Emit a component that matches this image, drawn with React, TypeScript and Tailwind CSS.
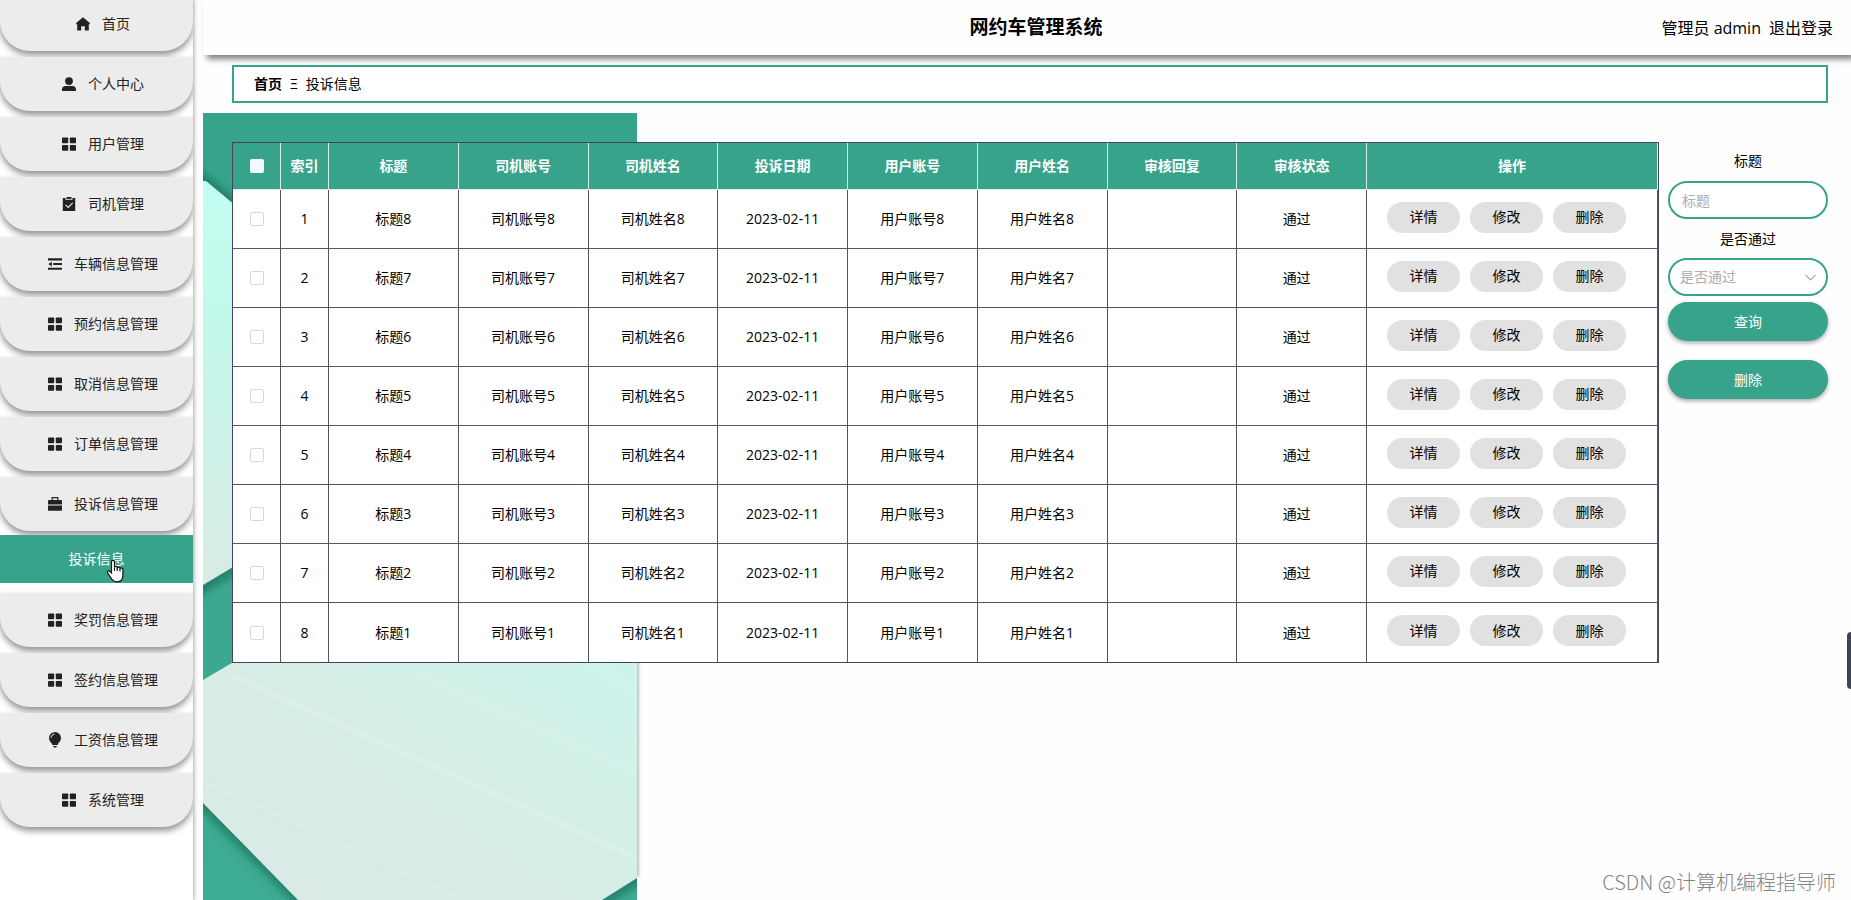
import type { ReactNode } from "react";

type IconName = "home" | "user" | "menu" | "claim" | "fold" | "briefcase" | "bulb";

interface MenuItem {
  label: string;
  icon: IconName;
  children?: string[];
}

const menu: MenuItem[] = [
  { label: "首页", icon: "home" },
  { label: "个人中心", icon: "user" },
  { label: "用户管理", icon: "menu" },
  { label: "司机管理", icon: "claim" },
  { label: "车辆信息管理", icon: "fold" },
  { label: "预约信息管理", icon: "menu" },
  { label: "取消信息管理", icon: "menu" },
  { label: "订单信息管理", icon: "menu" },
  { label: "投诉信息管理", icon: "briefcase", children: ["投诉信息"] },
  { label: "奖罚信息管理", icon: "menu" },
  { label: "签约信息管理", icon: "menu" },
  { label: "工资信息管理", icon: "bulb" },
  { label: "系统管理", icon: "menu" },
];

const columns = ["标题", "司机账号", "司机姓名", "投诉日期", "用户账号", "用户姓名", "审核回复", "审核状态"];

const rows = [8, 7, 6, 5, 4, 3, 2, 1].map((n) => ({
  title: `标题${n}`,
  driverAccount: `司机账号${n}`,
  driverName: `司机姓名${n}`,
  date: "2023-02-11",
  userAccount: `用户账号${n}`,
  userName: `用户姓名${n}`,
  reply: "",
  status: "通过",
}));

const icons: Record<IconName, ReactNode> = {
  home: <path d="M7 0.3 0.2 6v1.2h1V13.500h4V9.2h3.6V13.500h4V7.2h1V6z" />,
  user: (
    <>
      <circle cx="7" cy="4.1" r="3.9" />
      <path d="M0 14v-1.6C0 10.2 1.6 9 3.6 9h6.8c2 0 3.6 1.2 3.6 3.4V14z" />
    </>
  ),
  menu: (
    <>
      <rect x="0" y="0.5" width="6.2" height="5.8" rx="0.8" />
      <rect x="7.8" y="0.5" width="6.2" height="5.8" rx="0.8" />
      <rect x="0" y="8" width="6.2" height="5.8" rx="0.8" />
      <rect x="7.8" y="8" width="6.2" height="5.8" rx="0.8" />
    </>
  ),
  claim: (
    <>
      <path d="M0.8 1h2.7v1.8h7V1h2.7v13H0.8z" />
      <path d="M4.5 0h5v1.9h-5z" />
      <path d="m3.6 7.8 2.6 2.6 4.5-4.6" fill="none" stroke="#ececec" strokeWidth="1.2" />
    </>
  ),
  fold: <path d="M0 1.3h14v2.1H0zM5.2 6H14v2.1H5.2zM0 10.7h14v2.1H0zM0.3 7.1 3.8 4.8v4.6z" />,
  briefcase: (
    <>
      <path d="M4.2 3V0.6h5.6V3" fill="none" stroke="currentColor" strokeWidth="1.2" />
      <path d="M1 3h12a1 1 0 0 1 1 1v3.4H0V4a1 1 0 0 1 1-1zM0 8.4h14V13a.8.8 0 0 1-.8.8H.8A.8.8 0 0 1 0 13z" />
    </>
  ),
  bulb: (
    <>
      <path d="M7 -1a6 6 0 0 1 6 6c0 2.6-1.5 3.9-2.4 5.1-.6.8-.8 1.3-.9 2H4.3c-.1-.7-.3-1.2-.9-2C2.5 8.9 1 7.6 1 5a6 6 0 0 1 6-6z" />
      <path d="M5.2 13h3.6v.7l-.9.8H6.1l-.9-.8z" />
      <path d="M3 4.8C3.2 2.7 4.5 1.4 6.4 1" fill="none" stroke="#ececec" strokeWidth="1" />
    </>
  ),
};

function MenuIcon({ name }: { name: IconName }) {
  return (
    <svg className="size-3.5 shrink-0 overflow-visible" viewBox="0 0 14 14" fill="currentColor" aria-hidden="true">
      {icons[name]}
    </svg>
  );
}

function HandCursor() {
  return (
    <svg className="pointer-events-none absolute top-7 left-[106px] h-6 w-[19px]" viewBox="0 0 19 24" aria-hidden="true">
      <path
        d="M5.5 14V3c0-2.3 3-2.3 3 0v5.5c.3-1.5 2.7-1.4 2.8.3.6-1.2 2.6-.9 2.7.7.7-1 2.9-.6 2.9 1.300V16c0 4-2 6.8-5.900 6.800-3.300 0-4.700-1.400-6-3.800l-3.300-4.800c-1.100-1.700.6-3 2-1.800z"
        fill="#fff"
        stroke="#111"
        strokeWidth="1.2"
      />
      <path d="M8.5 8.5V12M11.3 9V12M14 10V12.5" stroke="#111" strokeWidth="1.1" />
    </svg>
  );
}

function Sidebar() {
  return (
    <aside className="w-[193px] shrink-0 overflow-hidden bg-white shadow-[1px_0_4px_rgba(0,0,0,0.35)]">
      <ul className="-mt-[3px] flex flex-col gap-1.5">
        {menu.map((item) => (
          <li key={item.label}>
            <button
              type="button"
              className="flex h-[54px] w-full items-center justify-center gap-3 rounded-b-[30px] bg-[#ececec] pl-[13px] text-[#222] shadow-[0_4px_6px_rgba(0,0,0,0.42)]"
            >
              <MenuIcon name={item.icon} />
              {item.label}
            </button>
            {item.children?.map((child) => (
              <div key={child} className="relative py-1">
                <a href="#" className="flex h-12 items-center justify-center bg-[#37a38b] text-white">
                  {child}
                </a>
                <HandCursor />
              </div>
            ))}
          </li>
        ))}
      </ul>
    </aside>
  );
}

// Folded paper artwork behind the table
function Backdrop() {
  return (
    <svg className="absolute top-0 left-0 h-[787px] w-[440px]" viewBox="0 0 440 787" aria-hidden="true">
      <defs>
        <linearGradient id="upper" x1="0" y1="68" x2="0" y2="472" gradientUnits="userSpaceOnUse">
          <stop offset="0" stopColor="#c3fff1" />
          <stop offset="0.35" stopColor="#c3f9ec" />
          <stop offset="0.7" stopColor="#cff1e8" />
          <stop offset="1" stopColor="#d9ebe6" />
        </linearGradient>
        <linearGradient id="lower" x1="434" y1="550" x2="230" y2="880" gradientUnits="userSpaceOnUse">
          <stop offset="0" stopColor="#cdf5ec" />
          <stop offset="0.45" stopColor="#d4eee6" />
          <stop offset="1" stopColor="#dbe9e5" />
        </linearGradient>
        <linearGradient id="base" x1="0" y1="0" x2="0" y2="1">
          <stop offset="0" stopColor="#37a38b" />
          <stop offset="1" stopColor="#3eab93" />
        </linearGradient>
        <clipPath id="sheet">
          <rect width="434" height="787" />
        </clipPath>
        <filter id="soft" x="-20%" y="-20%" width="140%" height="140%">
          <feGaussianBlur stdDeviation="4" />
        </filter>
        <filter id="edge" x="-300%" width="700%">
          <feGaussianBlur stdDeviation="1.5" />
        </filter>
      </defs>
      <rect x="432" y="540" width="4" height="224" fill="#000" opacity="0.25" filter="url(#edge)" />
      <g clipPath="url(#sheet)">
        <rect width="434" height="787" fill="url(#base)" />
        <g stroke="#0b5c49" strokeWidth="9" fill="none" opacity="0.65" filter="url(#soft)">
          <path d="M-10 58 80 133" />
          <path d="M-10 480 80 426" />
          <path d="M-20 670 115 807" />
          <path d="M380 799 450 757" />
        </g>
        <path d="M0 68h3L80 132V424L0 472z" fill="url(#upper)" />
        <path d="M0 567 80 520H434V765L399 787H95L0 690z" fill="url(#lower)" />
        <g stroke="#e2f4ee" fill="none" opacity="0.45" filter="url(#edge)">
          <path d="M30 563 434 745" strokeWidth="5" />
          <path d="M200 555 434 660" strokeWidth="3" />
          <path d="M0 668 260 787" strokeWidth="3" />
        </g>
      </g>
    </svg>
  );
}

function RowAction({ children }: { children: string }) {
  return (
    <button type="button" className="h-[31px] w-[73px] rounded-full bg-[#e1e1e1]">
      {children}
    </button>
  );
}

function ComplaintTable() {
  return (
    <table className="w-full min-w-0 flex-1 table-fixed border-separate border-spacing-0 border border-[#45445f] bg-white text-center">
      <colgroup>
        <col className="w-12" />
        <col className="w-12" />
        {columns.map((c) => (
          <col key={c} />
        ))}
        <col className="w-[291px]" />
      </colgroup>
      <thead>
        <tr className="h-[47px] bg-[#37a38b] text-white [&>th]:border-r [&>th]:border-b [&>th]:border-[#d5eee8] [&>th]:p-0">
          <th>
            <input
              type="checkbox"
              aria-label="全选"
              className="mx-auto block size-3.5 appearance-none rounded-xs bg-[#f0f7fd]"
            />
          </th>
          <th>索引</th>
          {columns.map((c) => (
            <th key={c}>{c}</th>
          ))}
          <th>操作</th>
        </tr>
      </thead>
      <tbody>
        {rows.map((row, i) => (
          <tr
            key={row.title}
            className="h-[59px] [&>td]:border-r [&>td]:border-b [&>td]:border-[#57556e] [&>td]:p-0 last:[&>td]:border-b-0"
          >
            <td>
              <input
                type="checkbox"
                aria-label={row.title}
                className="mx-auto block size-3.5 appearance-none rounded-xs border border-[#d8d8dc] bg-white"
              />
            </td>
            <td>{i + 1}</td>
            <td>{row.title}</td>
            <td>{row.driverAccount}</td>
            <td>{row.driverName}</td>
            <td>{row.date}</td>
            <td>{row.userAccount}</td>
            <td>{row.userName}</td>
            <td>{row.reply}</td>
            <td>
              <span className="mr-2.5">{row.status}</span>
            </td>
            <td>
              <div className="flex gap-2.5 pb-1 pl-5">
                <RowAction>详情</RowAction>
                <RowAction>修改</RowAction>
                <RowAction>删除</RowAction>
              </div>
            </td>
          </tr>
        ))}
      </tbody>
    </table>
  );
}

function SearchForm() {
  return (
    <form className="flex w-40 shrink-0 flex-col pt-[9px] text-center" onSubmit={(e) => e.preventDefault()}>
      <label htmlFor="title" className="leading-5">
        标题
      </label>
      <input
        id="title"
        type="text"
        placeholder="标题"
        className="mt-2.5 h-[38px] w-full rounded-full border-2 border-[#37a38b] bg-white px-3 outline-none placeholder:text-[#acacb2]"
      />
      <label htmlFor="passed" className="mt-2.5 leading-5">
        是否通过
      </label>
      <div className="relative mt-[9px]">
        <select
          id="passed"
          defaultValue=""
          className="block h-[38px] w-full appearance-none rounded-full border-2 border-[#37a38b] bg-white px-2.5 text-[#acacb2] outline-none"
        >
          <option value="">是否通过</option>
          <option value="是">是</option>
          <option value="否">否</option>
        </select>
        <svg
          className="pointer-events-none absolute top-4 right-3 h-[7px] w-[11px]"
          viewBox="0 0 11 7"
          fill="none"
          stroke="#a4a8b0"
          strokeWidth="1.2"
          aria-hidden="true"
        >
          <path d="m.5.8 5 5 5-5" />
        </svg>
      </div>
      <button type="submit" className="mt-1.5 h-[39px] rounded-full bg-[#37a38b] text-white shadow-[0_2px_4px_rgba(0,0,0,0.35)]">
        查询
      </button>
      <button type="button" className="mt-[19px] h-[39px] rounded-full bg-[#37a38b] text-white shadow-[0_2px_4px_rgba(0,0,0,0.35)]">
        删除
      </button>
    </form>
  );
}

export default function App() {
  return (
    <div className="relative flex min-h-screen gap-2.5 overflow-hidden bg-[#fefefe] font-['Open_Sans','Noto_Sans_CJK_SC',sans-serif] text-sm text-black">
      <Sidebar />

      <div className="flex min-w-0 flex-1 flex-col">
        <header className="grid h-[55px] grid-cols-[1fr_auto_1fr] items-center bg-[#fefefe] pr-[18px] pl-9 shadow-[4px_4px_6px_rgba(0,0,0,0.5)]">
          <h1 className="col-start-2 text-[19px] font-bold">网约车管理系统</h1>
          <div className="flex justify-end gap-2 text-base">
            <span>管理员 admin</span>
            <a href="#">退出登录</a>
          </div>
        </header>

        <nav className="mt-2.5 mr-[23px] ml-[29px] flex h-[38px] items-center gap-2 border-2 border-[#37a38b] bg-white px-5">
          <a href="#" className="font-bold">
            首页
          </a>
          <span>Ξ</span>
          <span>投诉信息</span>
        </nav>

        <main className="relative mt-2.5 flex-1">
          <Backdrop />
          <div className="relative flex items-start gap-[9px] pt-[29px] pr-[23px] pl-[29px]">
            <ComplaintTable />
            <SearchForm />
          </div>
        </main>
      </div>

      <div className="absolute top-[632px] right-0 h-[57px] w-1 rounded-l-sm bg-[#3c4653]" />
      <p className="absolute right-[15px] bottom-1 font-['Noto_Sans_CJK_SC',sans-serif] text-xl font-light text-[#858585]">
        CSDN @计算机编程指导师
      </p>
    </div>
  );
}
